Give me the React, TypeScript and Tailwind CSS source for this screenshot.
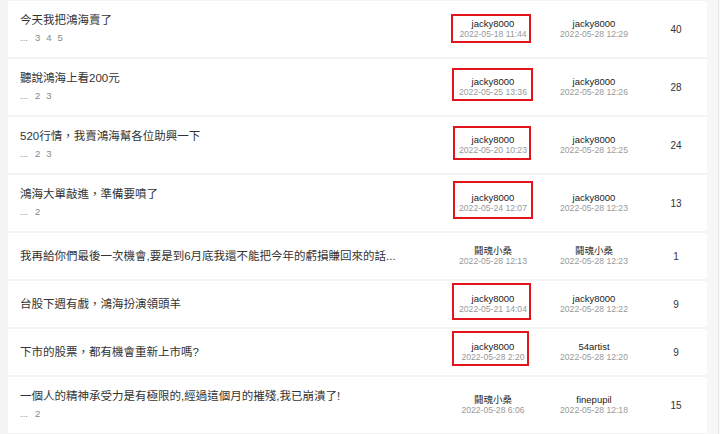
import React from "react";

type Box = { l: number; t: number; w: number; h: number };
type Row = {
  title: string;
  pages?: string[];
  author: string;
  created: string;
  last: string;
  lastTime: string;
  count: string;
  box?: Box;
};

const rows: Row[] = [
  { title: "今天我把鴻海賣了", pages: ["3", "4", "5"], author: "jacky8000", created: "2022-05-18 11:44", last: "jacky8000", lastTime: "2022-05-28 12:29", count: "40", box: { l: 8, t: 13, w: 80, h: 29 } },
  { title: "聽說鴻海上看200元", pages: ["2", "3"], author: "jacky8000", created: "2022-05-25 13:36", last: "jacky8000", lastTime: "2022-05-28 12:26", count: "28", box: { l: 9, t: 9, w: 81, h: 33 } },
  { title: "520行情，我賣鴻海幫各位助興一下", pages: ["2", "3"], author: "jacky8000", created: "2022-05-20 10:23", last: "jacky8000", lastTime: "2022-05-28 12:25", count: "24", box: { l: 10, t: 9, w: 78, h: 34 } },
  { title: "鴻海大單敲進，準備要噴了", pages: ["2"], author: "jacky8000", created: "2022-05-24 12:07", last: "jacky8000", lastTime: "2022-05-28 12:23", count: "13", box: { l: 10, t: 6, w: 80, h: 38 } },
  { title: "我再給你們最後一次機會,要是到6月底我還不能把今年的虧損賺回來的話...", author: "鬪魂小桑", created: "2022-05-28 12:13", last: "鬪魂小桑", lastTime: "2022-05-28 12:23", count: "1" },
  { title: "台股下週有戲，鴻海扮演領頭羊", author: "jacky8000", created: "2022-05-21 14:04", last: "jacky8000", lastTime: "2022-05-28 12:22", count: "9", box: { l: 9, t: 2, w: 79, h: 37 } },
  { title: "下市的股票，都有機會重新上市嗎?", author: "jacky8000", created: "2022-05-28 2:20", last: "54artist", lastTime: "2022-05-28 12:20", count: "9", box: { l: 9, t: 2, w: 77, h: 35 } },
  { title: "一個人的精神承受力是有極限的,經過這個月的摧殘,我已崩潰了!", pages: ["2"], author: "鬪魂小桑", created: "2022-05-28 6:06", last: "finepupil", lastTime: "2022-05-28 12:18", count: "15" },
];

const font = { fontFamily: '"Liberation Sans", "Noto Sans CJK TC", sans-serif' };

function Cell({ name, time, box }: { name: string; time: string; box?: Box }) {
  return (
    <div className="relative flex flex-col items-center justify-center">
      <div className="text-[9.5px] leading-[11.5px] text-[#222]">{name}</div>
      <div className="text-[8.6px] leading-[11.5px] text-[#999]">{time}</div>
      {box && (
        <div
          className="absolute border-2 border-[#e3141c]"
          style={{ left: box.l, top: box.t, width: box.w, height: box.h }}
        />
      )}
    </div>
  );
}

export default function App() {
  return (
    <div lang="zh-TW" className="flex h-[434px] w-[720px] overflow-hidden bg-[#f4f4f4]" style={font}>
      <div className="flex flex-1 flex-col gap-[2px] pl-[8px] pt-[1px]">
        {rows.map((r, i) => (
          <div
            key={i}
            className={`grid shrink-0 grid-cols-[1fr_100px_102px_62px] bg-white ${r.pages ? "h-[56px]" : "h-[46px]"}`}
          >
            <div className={`flex flex-col pl-[12px] ${r.pages ? "pt-[11px]" : "justify-center"}`}>
              <div className="whitespace-nowrap text-[11.5px] leading-[16px] text-[#333]">{r.title}</div>
              {r.pages && (
                <div className="mt-[4px] flex gap-[6px] text-[9.5px] leading-[12px] text-[#888]">
                  <span className="mr-[1px]">...</span>
                  {r.pages.map((p) => (
                    <span key={p}>{p}</span>
                  ))}
                </div>
              )}
            </div>
            <Cell name={r.author} time={r.created} box={r.box} />
            <Cell name={r.last} time={r.lastTime} />
            <div className="flex items-center justify-center text-[10px] text-[#333]">{r.count}</div>
          </div>
        ))}
      </div>
      <div className="flex w-[13px] shrink-0">
        <div className="w-[11px] bg-[#f7f7f7]" />
        <div className="w-[1px] bg-[#e6e6e6]" />
        <div className="w-[1px] bg-[#fafafa]" />
      </div>
    </div>
  );
}
